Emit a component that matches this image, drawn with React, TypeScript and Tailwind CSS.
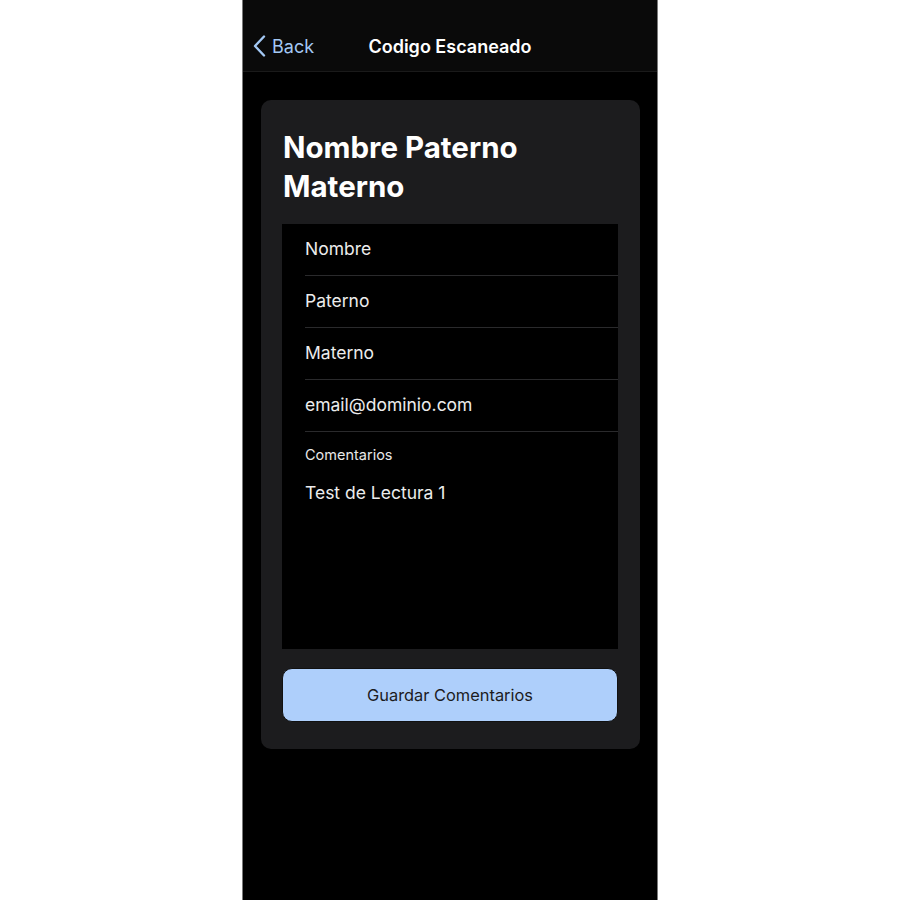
const fields = ['Nombre', 'Paterno', 'Materno', 'email@dominio.com'];

function BackChevron() {
  return (
    <svg width="13" height="22" viewBox="0 0 13 22" fill="none">
      <path d="M11 1.5 L2 11 L11 20.5" stroke="#a3c8f4" strokeWidth="2.4" strokeLinecap="round" strokeLinejoin="round" />
    </svg>
  );
}

export default function App() {
  return (
    <div className="min-h-screen bg-white flex justify-center" style={{ fontFamily: 'Inter, "Noto Sans", sans-serif' }}>
      <div className="w-[416px] h-[900px] bg-black border-x border-[#7a7a7a] flex flex-col">
        <header className="h-[72px] pt-[21px] bg-[#0a0a0a] border-b border-[#1a1a1a] grid grid-cols-[1fr_auto_1fr] items-center">
          <button className="flex items-center gap-[6px] pl-[10px] text-[#a3c8f4] text-[18px]">
            <BackChevron />
            <span>Back</span>
          </button>
          <h1 className="text-white text-[18px] font-semibold">Codigo Escaneado</h1>
          <div />
        </header>

        <div className="pt-[28px] pl-[18px] pr-[17px]">
          <section className="bg-[#1c1c1e] rounded-[10px] pt-[28px] pb-[27px] pl-[21px] pr-[22px]">
            <h2 className="text-white text-[29.5px] leading-[39px] font-bold pl-[1px] mb-[18px]">
              Nombre Paterno
              <br />
              Materno
            </h2>

            <div className="bg-black h-[425px] flex flex-col">
              {fields.map((f) => (
                <div key={f} className="pl-[23px]">
                  <div className="h-[52px] border-b border-[#2a2a2c] flex items-center text-[17.5px] text-[#ececec]">
                    {f}
                  </div>
                </div>
              ))}
              <div className="pl-[23px] pt-[12px]">
                <div className="text-[14.5px] text-[#e8e8e8]">Comentarios</div>
                <div className="mt-[14px] text-[17.5px] text-[#ececec]">Test de Lectura 1</div>
              </div>
            </div>

            <button className="mt-[19px] w-full h-[54px] rounded-[10px] bg-[#aecffb] border border-[#111] text-[16.4px] text-[#1c1c1e]">
              Guardar Comentarios
            </button>
          </section>
        </div>
      </div>
    </div>
  );
}
